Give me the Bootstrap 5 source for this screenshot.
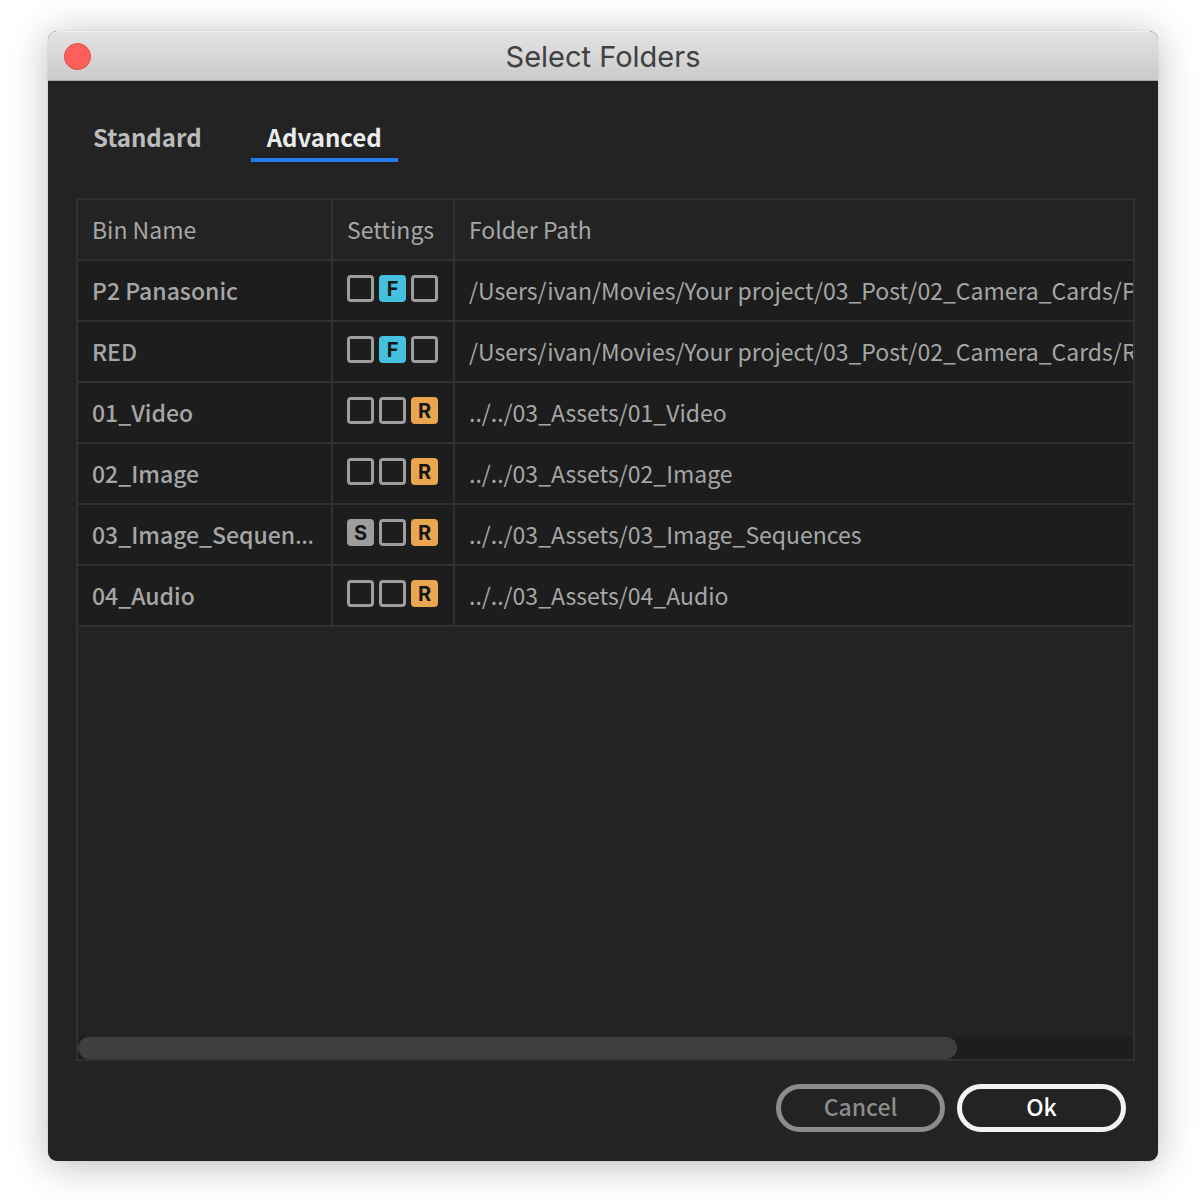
<!DOCTYPE html>
<html lang="en">
<head>
<meta charset="utf-8">
<meta name="viewport" content="width=device-width, initial-scale=1">
<title>Select Folders</title>
<link rel="stylesheet" href="https://cdn.jsdelivr.net/npm/bootstrap@5.3.0/dist/css/bootstrap.min.css">
<style>
  :root { --line: #313131; --panel: #232323; --well: #1d1d1d; --ink: #a6a6a6; }
  body {
    font-family: "Noto Sans CJK SC", "Noto Sans", sans-serif;
    font-size: 23px; line-height: 32px; color: var(--ink);
    background: #fff; padding: 31px 42px 39px 48px;
  }
  .dialog-window {
    background: var(--panel); border-radius: 9px;
    box-shadow: 0 0 1px rgba(0,0,0,.3), 0 4px 38px rgba(0,0,0,.27);
  }
  .title-bar {
    height: 50px; border-radius: 9px 9px 0 0; padding: 0 16px;
    background: linear-gradient(#e3e3e3, #cbcbcb);
    border-top: 1px solid #efefef; border-bottom: 1px solid #a8a8a8;
  }
  .title-bar h1 { font: 400 29px/32px Inter, sans-serif; color: #404040; padding-top: 2px; }
  .close-dot { width: 27px; height: 27px; border: 1px solid #e2453f; background: #ff5f5a; }
  .title-spacer { width: 27px; }
  .dialog-body { padding: 39px 23px 29px 28px; }
  .tab-strip { gap: 33px; margin: 0 1px 36px; }
  .tab-strip .nav-link {
    padding: 0 16px; height: 42px; border-bottom: 4px solid transparent;
    font-size: 24px; line-height: 34px; font-weight: 700; color: #bcbcbc;
  }
  .tab-strip .nav-link.active { color: #ebebeb; border-color: #2779ee; }
  .folder-list { border: 2px solid var(--line); }
  .folder-table { table-layout: fixed; border-collapse: separate; border-spacing: 0; }
  .folder-table th, .folder-table td {
    height: 61px; padding: 0 14px 2px; vertical-align: middle; white-space: nowrap; overflow: hidden;
    border-bottom: 2px solid var(--line); border-right: 2px solid var(--line); font-weight: 400;
  }
  .folder-table th:last-child, .folder-table td:last-child { border-right: 0; padding-right: 0; }
  .folder-table tbody { background: var(--well); }
  .folder-table tbody th { font-weight: 500; }
  .dots { font-family: "Noto Sans", sans-serif; line-height: 1; }
  .col-bin { width: 255px; }
  .col-settings { width: 122px; }
  .flags { gap: 5px; padding-bottom: 2px; }
  .flag {
    width: 27px; height: 27px; padding: 0; border: 3px solid #9d9d9d; border-radius: 4px;
    background: transparent; color: #161616; font: 700 20px/22px Inter, sans-serif;
  }
  .flag-s { background: #9d9d9d; }
  .flag-f { background: #43c1de; border-color: #43c1de; }
  .flag-r { background: #eaa54f; border-color: #eaa54f; }
  .scroll-track { height: 22px; background: var(--well); }
  .scroll-thumb { width: 83.3%; background: #3f3f3f; }
  .dialog-actions { gap: 12px; padding: 23px 9px 0 0; }
  .btn-pill {
    width: 169px; height: 48px; padding: 0 0 4px; border: 5px solid #8c8c8c; border-radius: 24px;
    font-size: 23px; line-height: 32px; font-weight: 500; color: #8c8c8c;
  }
  .btn-pill:hover { color: #fff; border-color: #f2f2f2; }
  .btn-ok { border-color: #f2f2f2; color: #fff; }
</style>
<script src="https://cdn.jsdelivr.net/npm/bootstrap@5.3.0/dist/js/bootstrap.bundle.min.js"></script>
</head>
<body class="min-vh-100 d-flex flex-column">
<main class="dialog-window flex-grow-1 d-flex flex-column">
  <header class="title-bar d-flex align-items-center justify-content-between">
    <button type="button" class="close-dot rounded-circle p-0" aria-label="Close"></button>
    <h1 class="mb-0">Select Folders</h1>
    <span class="title-spacer"></span>
  </header>
  <div class="dialog-body flex-grow-1 d-flex flex-column">
    <nav class="nav tab-strip">
      <a class="nav-link" href="#standard">Standard</a>
      <a class="nav-link active" href="#advanced" aria-current="page">Advanced</a>
    </nav>
    <section class="folder-list flex-grow-1 d-flex flex-column justify-content-between">
      <table class="folder-table w-100">
        <colgroup><col class="col-bin"><col class="col-settings"><col></colgroup>
        <thead>
          <tr><th scope="col">Bin Name</th><th scope="col">Settings</th><th scope="col">Folder Path</th></tr>
        </thead>
        <tbody>
          <tr>
            <th scope="row">P2 Panasonic</th>
            <td><div class="flags d-flex"><button type="button" class="flag" aria-label="S off"></button><button type="button" class="flag flag-f">F</button><button type="button" class="flag" aria-label="R off"></button></div></td>
            <td>/Users/ivan/Movies/Your project/03_Post/02_Camera_Cards/P2</td>
          </tr>
          <tr>
            <th scope="row">RED</th>
            <td><div class="flags d-flex"><button type="button" class="flag" aria-label="S off"></button><button type="button" class="flag flag-f">F</button><button type="button" class="flag" aria-label="R off"></button></div></td>
            <td>/Users/ivan/Movies/Your project/03_Post/02_Camera_Cards/RED</td>
          </tr>
          <tr>
            <th scope="row">01_Video</th>
            <td><div class="flags d-flex"><button type="button" class="flag" aria-label="S off"></button><button type="button" class="flag" aria-label="F off"></button><button type="button" class="flag flag-r">R</button></div></td>
            <td>../../03_Assets/01_Video</td>
          </tr>
          <tr>
            <th scope="row">02_Image</th>
            <td><div class="flags d-flex"><button type="button" class="flag" aria-label="S off"></button><button type="button" class="flag" aria-label="F off"></button><button type="button" class="flag flag-r">R</button></div></td>
            <td>../../03_Assets/02_Image</td>
          </tr>
          <tr>
            <th scope="row">03_Image_Sequen<span class="dots">…</span></th>
            <td><div class="flags d-flex"><button type="button" class="flag flag-s">S</button><button type="button" class="flag" aria-label="F off"></button><button type="button" class="flag flag-r">R</button></div></td>
            <td>../../03_Assets/03_Image_Sequences</td>
          </tr>
          <tr>
            <th scope="row">04_Audio</th>
            <td><div class="flags d-flex"><button type="button" class="flag" aria-label="S off"></button><button type="button" class="flag" aria-label="F off"></button><button type="button" class="flag flag-r">R</button></div></td>
            <td>../../03_Assets/04_Audio</td>
          </tr>
        </tbody>
      </table>
      <div class="scroll-track"><div class="scroll-thumb h-100 rounded-pill"></div></div>
    </section>
    <footer class="dialog-actions d-flex justify-content-end">
      <button type="button" class="btn btn-pill">Cancel</button>
      <button type="button" class="btn btn-pill btn-ok">Ok</button>
    </footer>
  </div>
</main>
</body>
</html>
